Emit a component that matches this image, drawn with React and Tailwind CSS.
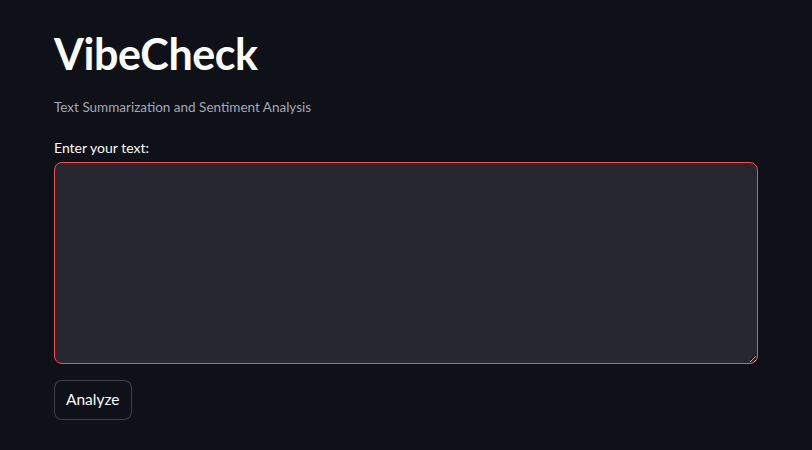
import React, { useState } from "react";

const App = () => {
  const [text, setText] = useState("");

  return (
    <div
      className="min-h-[450px] w-full bg-[#0e1117] text-[#fafafa]"
      style={{ fontFamily: "Lato, 'Noto Sans', sans-serif" }}
    >
      <div className="flex flex-col pl-[54px] pr-[54px] pt-[28px]">
        <h1 className="text-[43px] font-bold leading-[1.2] tracking-[-0.01em] text-white">
          VibeCheck
        </h1>

        <p className="mt-[17px] text-[13.5px] leading-[20px] text-[#a3a8b8]">
          Text Summarization and Sentiment Analysis
        </p>

        <label className="mt-[21px] text-[14px] leading-[20px] text-[#fafafa]">
          Enter your text:
        </label>

        <textarea
          value={text}
          onChange={(e) => setText(e.target.value)}
          className="mt-[4px] h-[202px] w-full resize-y rounded-[8px] border border-[#ff4b4b] bg-[#262730] px-3 py-2 text-[14px] text-[#fafafa] outline-none"
        />

        <div className="mt-[16px]">
          <button className="h-[40px] rounded-[8px] border border-[#fafafa]/20 bg-[#0e1117] px-[11px] text-[15.5px] text-[#fafafa] hover:border-[#ff4b4b] hover:text-[#ff4b4b]">
            Analyze
          </button>
        </div>
      </div>
    </div>
  );
};

export default App;
